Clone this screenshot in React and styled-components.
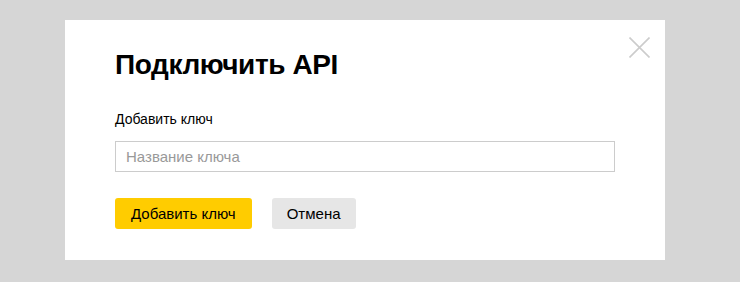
import React from "react";
import styled, { createGlobalStyle } from "styled-components";

const Global = createGlobalStyle`
  html, body { margin: 0; padding: 0; }
  body {
    background: #d6d6d6;
    font-family: "Liberation Sans", Arial, sans-serif;
    width: 740px;
    height: 282px;
    overflow: hidden;
  }
`;

const Overlay = styled.div`
  display: flex;
  padding: 20px 0 0 65px;
`;

const Modal = styled.div`
  position: relative;
  width: 600px;
  box-sizing: border-box;
  background: #fff;
  padding: 29px 50px 31px;
  display: flex;
  flex-direction: column;
`;

const Close = styled.button`
  position: absolute;
  top: 17px;
  right: 15px;
  width: 21px;
  height: 21px;
  padding: 0;
  border: 0;
  background: none;
  cursor: pointer;
  display: block;
`;

const Title = styled.h1`
  margin: 0;
  font-size: 28px;
  line-height: 32px;
  letter-spacing: -0.4px;
  font-weight: 700;
  color: #000;
`;

const Label = styled.label`
  margin-top: 30px;
  font-size: 14px;
  line-height: 16px;
  color: #000;
`;

const Input = styled.input`
  margin-top: 14px;
  box-sizing: border-box;
  width: 500px;
  height: 31px;
  border: 1px solid #ccc;
  padding: 0 10px;
  font-family: inherit;
  font-size: 15px;
  color: #000;
  outline: none;
  &::placeholder { color: #999; }
`;

const Actions = styled.div`
  display: flex;
  gap: 20px;
  margin-top: 26px;
`;

const Button = styled.button`
  height: 31px;
  padding: 0 ${(p) => (p.$primary ? "16px" : "15px")};
  border: 0;
  border-radius: 3px;
  background: ${(p) => (p.$primary ? "#ffcc00" : "#e6e6e6")};
  color: #000;
  font-family: inherit;
  font-size: 15px;
  cursor: pointer;
`;

export default function App() {
  return (
    <>
      <Global />
      <Overlay>
        <Modal>
          <Close aria-label="Закрыть">
            <svg width="21" height="21" viewBox="0 0 21 21">
              <path d="M0.5 0.5L20.5 20.5M20.5 0.5L0.5 20.5" stroke="#ccc" strokeWidth="1.6" fill="none" />
            </svg>
          </Close>
          <Title>Подключить API</Title>
          <Label>Добавить ключ</Label>
          <Input placeholder="Название ключа" />
          <Actions>
            <Button $primary>Добавить ключ</Button>
            <Button>Отмена</Button>
          </Actions>
        </Modal>
      </Overlay>
    </>
  );
}
